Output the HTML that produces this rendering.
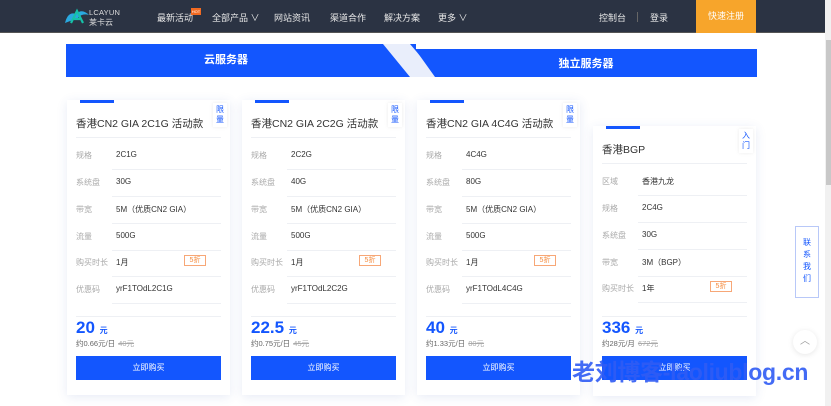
<!DOCTYPE html>
<html><head><meta charset="utf-8"><style>
*{margin:0;padding:0;box-sizing:border-box}
body{width:831px;height:406px;overflow:hidden;background:#fff;font-family:"Liberation Sans","Noto Sans CJK SC",sans-serif;position:relative}
.nav{position:absolute;left:0;top:0;width:825px;height:33px;background:#2b3343;border-bottom:1px solid #555}
.nav span{position:absolute;top:11px;font-size:9px;color:#e8e8e8}
.hot{position:absolute;left:191px;top:8px;width:10px;height:7px;background:#f26a21;font-size:4px;color:#fff;line-height:7px;text-align:center}
.reg{position:absolute;left:696px;top:0;width:60px;height:33px;background:#f7a52b;color:#fff;font-size:9px;text-align:center;line-height:33px}
.sb{position:absolute;left:825px;top:0;width:6px;height:406px;background:#f1f1f1}
.sb div{position:absolute;left:1px;top:40px;width:5px;height:145px;background:#c8c8c8}
.tab1{position:absolute;left:66px;top:44px;width:350px;height:33px;background:#1356fe;color:#fff;font-size:11px;font-weight:bold;text-align:center;line-height:33px;padding-right:30px}
.tab2{position:absolute;left:415px;top:49px;width:342px;height:28px;background:#1356fe;color:#fff;font-size:11px;font-weight:bold;text-align:center;line-height:30px}
.card{position:absolute;width:163px;height:295px;background:#fff;box-shadow:0 2px 10px rgba(60,90,180,.12)}
.bar{position:absolute;left:13px;top:0;width:34px;height:3px;background:#1356fe}
.tag{position:absolute;right:3px;top:3px;width:14px;height:24px;font-size:8px;color:#1356fe;line-height:10px;text-align:center;padding-top:2px;box-shadow:0 0 4px rgba(0,0,0,.08)}
.title{position:absolute;left:9px;top:16px;font-size:10.5px;color:#333}
.hr{position:absolute;left:9px;right:9px;height:1px;background:#eef0f4}
.row{position:absolute;left:9px;right:9px;height:27px;font-size:8px}
.row .k{position:absolute;left:0;top:7px;color:#aaa}
.row .v{position:absolute;left:40px;top:7px;color:#333}
.row .l{position:absolute;left:36px;right:0;bottom:0;height:1px;background:#eef0f4}
.zk{position:absolute;right:15px;top:5px;width:22px;height:11px;border:1px solid #f7a777;color:#f58a3c;font-size:7px;text-align:center;line-height:9px}
.price{position:absolute;left:9px;font-size:17px;font-weight:bold;color:#1356fe}
.price small{font-size:8px}
.sub{position:absolute;left:9px;font-size:7.5px;color:#666}
.sub s{color:#aaa;margin-left:3px}
.btn{position:absolute;left:9px;right:9px;height:24px;background:#1356fe;color:#fff;font-size:8px;text-align:center;line-height:24px}
.wm{position:absolute;left:572px;top:353px;font-size:23px;font-weight:bold;color:#2f5cf5;opacity:.9;letter-spacing:-0.3px;white-space:nowrap}
.contact{position:absolute;left:795px;top:226px;width:24px;height:72px;border:1px solid #b8c8f8;background:#fff;font-size:8px;color:#1356fe;text-align:center;line-height:12px;padding-top:10px}
.top{position:absolute;left:793px;top:330px;width:24px;height:24px;border-radius:50%;background:#fff;box-shadow:0 1px 6px rgba(0,0,0,.1);color:#999;font-size:10px;text-align:center;line-height:24px}
</style></head><body>
<div class="nav">
<svg style="position:absolute;left:64px;top:7px" width="26" height="18" viewBox="0 0 26 18"><path d="M1 16 Q4 4 12 7 Q18 1 25 8 Q18 6 14 11 Z" fill="#2aa9e0"/><path d="M7 16 L13 4 L19 16 M10 12 H16" stroke="#16c1a8" stroke-width="2.2" fill="none"/></svg>
<span style="left:89px;top:8px;font-size:7.5px;color:#ddd;letter-spacing:0.2px">LCAYUN</span>
<span style="left:89px;top:17px;font-size:8px;color:#ddd">莱卡云</span>
<span style="left:157px">最新活动</span><div class="hot">HOT</div>
<span style="left:212px">全部产品 ∨</span>
<span style="left:274px">网站资讯</span>
<span style="left:330px">渠道合作</span>
<span style="left:384px">解决方案</span>
<span style="left:438px">更多 ∨</span>
<span style="left:599px">控制台</span>
<div style="position:absolute;left:637px;top:12px;width:1px;height:10px;background:#666"></div>
<span style="left:650px">登录</span>
<div class="reg">快速注册</div>
</div>
<div class="sb"><div></div></div>
<div class="tab1">云服务器</div>
<div class="tab2">独立服务器</div>
<svg style="position:absolute;left:380px;top:44px" width="60" height="33"><polygon points="3,0 30,0 58,33 30,33" fill="#e9eefb"/><polygon points="35,5 60,5 60,33 55,33" fill="#1356fe"/></svg>

<div class="card" style="left:67px;top:100px">
<div class="bar"></div><div class="tag">限<br>量</div>
<div class="title">香港CN2 GIA 2C1G 活动款</div><div class="hr" style="top:37px"></div>
<div class="row" style="top:43px"><span class="k">规格</span><span class="v">2C1G</span><i class="l"></i></div>
<div class="row" style="top:70px"><span class="k">系统盘</span><span class="v">30G</span><i class="l"></i></div>
<div class="row" style="top:97px"><span class="k">带宽</span><span class="v">5M（优质CN2 GIA）</span><i class="l"></i></div>
<div class="row" style="top:124px"><span class="k">流量</span><span class="v">500G</span><i class="l"></i></div>
<div class="row" style="top:150px"><span class="k">购买时长</span><span class="v">1月</span><span class="zk">5折</span><i class="l"></i></div>
<div class="row" style="top:177px"><span class="k">优惠码</span><span class="v">yrF1TOdL2C1G</span><i class="l"></i></div>
<div class="hr" style="top:216px"></div>
<div class="price" style="top:218px">20 <small>元</small></div>
<div class="sub" style="top:238px">约0.66元/日<s>40元</s></div>
<div class="btn" style="top:256px">立即购买</div>
</div>

<div class="card" style="left:242px;top:100px">
<div class="bar"></div><div class="tag">限<br>量</div>
<div class="title">香港CN2 GIA 2C2G 活动款</div><div class="hr" style="top:37px"></div>
<div class="row" style="top:43px"><span class="k">规格</span><span class="v">2C2G</span><i class="l"></i></div>
<div class="row" style="top:70px"><span class="k">系统盘</span><span class="v">40G</span><i class="l"></i></div>
<div class="row" style="top:97px"><span class="k">带宽</span><span class="v">5M（优质CN2 GIA）</span><i class="l"></i></div>
<div class="row" style="top:124px"><span class="k">流量</span><span class="v">500G</span><i class="l"></i></div>
<div class="row" style="top:150px"><span class="k">购买时长</span><span class="v">1月</span><span class="zk">5折</span><i class="l"></i></div>
<div class="row" style="top:177px"><span class="k">优惠码</span><span class="v">yrF1TOdL2C2G</span><i class="l"></i></div>
<div class="hr" style="top:216px"></div>
<div class="price" style="top:218px">22.5 <small>元</small></div>
<div class="sub" style="top:238px">约0.75元/日<s>45元</s></div>
<div class="btn" style="top:256px">立即购买</div>
</div>

<div class="card" style="left:417px;top:100px">
<div class="bar"></div><div class="tag">限<br>量</div>
<div class="title">香港CN2 GIA 4C4G 活动款</div><div class="hr" style="top:37px"></div>
<div class="row" style="top:43px"><span class="k">规格</span><span class="v">4C4G</span><i class="l"></i></div>
<div class="row" style="top:70px"><span class="k">系统盘</span><span class="v">80G</span><i class="l"></i></div>
<div class="row" style="top:97px"><span class="k">带宽</span><span class="v">5M（优质CN2 GIA）</span><i class="l"></i></div>
<div class="row" style="top:124px"><span class="k">流量</span><span class="v">500G</span><i class="l"></i></div>
<div class="row" style="top:150px"><span class="k">购买时长</span><span class="v">1月</span><span class="zk">5折</span><i class="l"></i></div>
<div class="row" style="top:177px"><span class="k">优惠码</span><span class="v">yrF1TOdL4C4G</span><i class="l"></i></div>
<div class="hr" style="top:216px"></div>
<div class="price" style="top:218px">40 <small>元</small></div>
<div class="sub" style="top:238px">约1.33元/日<s>80元</s></div>
<div class="btn" style="top:256px">立即购买</div>
</div>

<div class="card" style="left:593px;top:126px;height:270px">
<div class="bar"></div><div class="tag">入<br>门</div>
<div class="title">香港BGP</div><div class="hr" style="top:37px"></div>
<div class="row" style="top:43px"><span class="k">区域</span><span class="v">香港九龙</span><i class="l"></i></div>
<div class="row" style="top:70px"><span class="k">规格</span><span class="v">2C4G</span><i class="l"></i></div>
<div class="row" style="top:97px"><span class="k">系统盘</span><span class="v">30G</span><i class="l"></i></div>
<div class="row" style="top:124px"><span class="k">带宽</span><span class="v">3M（BGP）</span><i class="l"></i></div>
<div class="row" style="top:150px"><span class="k">购买时长</span><span class="v">1年</span><span class="zk">5折</span><i class="l"></i></div>
<div class="hr" style="top:190px"></div>
<div class="price" style="top:192px">336 <small>元</small></div>
<div class="sub" style="top:212px">约28元/月<s>672元</s></div>
<div class="btn" style="top:230px">立即购买</div>
</div>

<div class="contact">联<br>系<br>我<br>们</div>
<div class="top">︿</div>
<div class="wm">老刘博客-laoliublog.cn</div>
</body></html>
